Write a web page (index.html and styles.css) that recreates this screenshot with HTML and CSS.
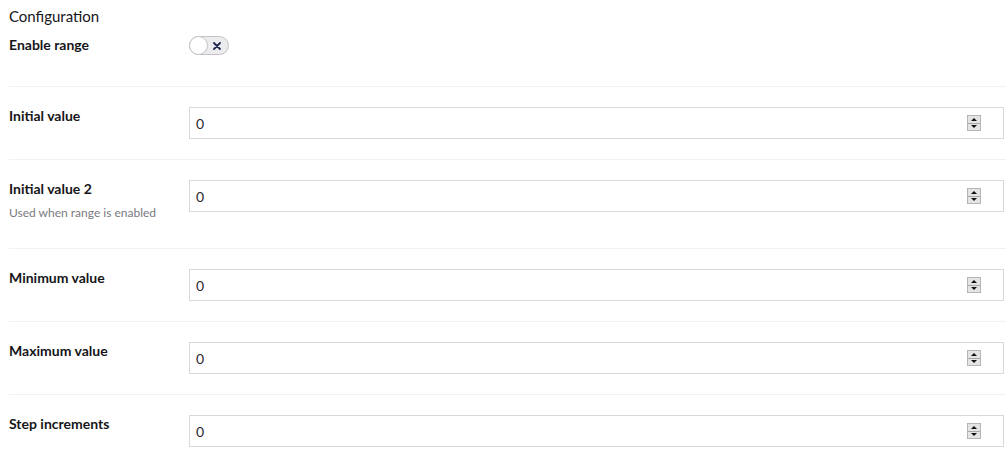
FILE: index.html
```html
<!DOCTYPE html>
<html lang="en">
<head>
  <meta charset="UTF-8">
  <title>Configuration</title>
  <link rel="stylesheet" href="styles.css">
</head>
<body>
  <div class="config">
    <h4 class="config-title">Configuration</h4>

    <div class="field field-toggle">
      <div class="field-label">
        <label>Enable range</label>
      </div>
      <div class="field-input">
        <span class="toggle">
          <span class="toggle-knob"></span>
          <svg class="toggle-x" width="8" height="8" viewBox="0 0 8 8">
            <path d="M1 1 L7 7 M7 1 L1 7" stroke="#1f2a4d" stroke-width="1.8" stroke-linecap="round"/>
          </svg>
        </span>
      </div>
    </div>

    <div class="field">
      <div class="field-label"><label>Initial value</label></div>
      <div class="field-input">
        <div class="number">
          <span class="number-value">0</span>
          <span class="spin"><i class="spin-up"></i><i class="spin-down"></i></span>
        </div>
      </div>
    </div>

    <div class="field">
      <div class="field-label">
        <label>Initial value 2</label>
        <p class="help">Used when range is enabled</p>
      </div>
      <div class="field-input">
        <div class="number">
          <span class="number-value">0</span>
          <span class="spin"><i class="spin-up"></i><i class="spin-down"></i></span>
        </div>
      </div>
    </div>

    <div class="field">
      <div class="field-label"><label>Minimum value</label></div>
      <div class="field-input">
        <div class="number">
          <span class="number-value">0</span>
          <span class="spin"><i class="spin-up"></i><i class="spin-down"></i></span>
        </div>
      </div>
    </div>

    <div class="field">
      <div class="field-label"><label>Maximum value</label></div>
      <div class="field-input">
        <div class="number">
          <span class="number-value">0</span>
          <span class="spin"><i class="spin-up"></i><i class="spin-down"></i></span>
        </div>
      </div>
    </div>

    <div class="field">
      <div class="field-label"><label>Step increments</label></div>
      <div class="field-input">
        <div class="number">
          <span class="number-value">0</span>
          <span class="spin"><i class="spin-up"></i><i class="spin-down"></i></span>
        </div>
      </div>
    </div>
  </div>
</body>
</html>
```

FILE: styles.css
```css
body {
  margin: 0;
  font-family: Lato, "Open Sans", sans-serif;
  color: #16161a;
  background: #fff;
}

.config {
  padding: 7px 0 0 9px;
}

.config-title {
  margin: 0;
  font-size: 15px;
  font-weight: 400;
  line-height: 18px;
}

.field {
  display: flex;
  padding: 20px 2px 20px 0;
  border-bottom: 1px solid #f1f1f3;
}

.field-toggle {
  padding-top: 11px;
  padding-bottom: 31px;
}

.field-label {
  width: 180px;
  flex: none;
}

.field-label label {
  display: block;
  font-size: 14px;
  font-weight: 700;
  line-height: 18px;
}

.help {
  margin: 7px 0 0;
  font-size: 12px;
  line-height: 16px;
  color: #7a7a80;
  padding-bottom: 7px;
}

.field-input {
  flex: 1;
}

/* toggle switch */
.toggle {
  position: relative;
  display: block;
  width: 38px;
  height: 17px;
  border: 1px solid #c4c4c8;
  border-radius: 10px;
  background: #ececef;
}

.toggle-knob {
  position: absolute;
  left: -1px;
  top: -1px;
  width: 17px;
  height: 17px;
  border: 1px solid #c4c4c8;
  border-radius: 50%;
  background: #fff;
}

.toggle-x {
  position: absolute;
  left: 23px;
  top: 5px;
}

/* number input */
.number {
  display: flex;
  align-items: center;
  height: 30px;
  border: 1px solid #d8d8dc;
  padding: 0 22px 0 6px;
}

.number-value {
  flex: 1;
  font-size: 14px;
  color: #2a2a2e;
}

.spin {
  display: flex;
  flex-direction: column;
  width: 12px;
  height: 14px;
  border: 1px solid #b5b5b5;
  background: #e4e4e4;
}

.spin i {
  flex: 1;
  position: relative;
}

.spin-up {
  border-bottom: 1px solid #a8a8a8;
}

.spin i::after {
  content: "";
  position: absolute;
  left: 3px;
  top: 2px;
  border-left: 3px solid transparent;
  border-right: 3px solid transparent;
}

.spin-up::after {
  border-bottom: 3px solid #111;
}

.spin-down::after {
  border-top: 3px solid #111;
  top: 1px !important;
}
```
